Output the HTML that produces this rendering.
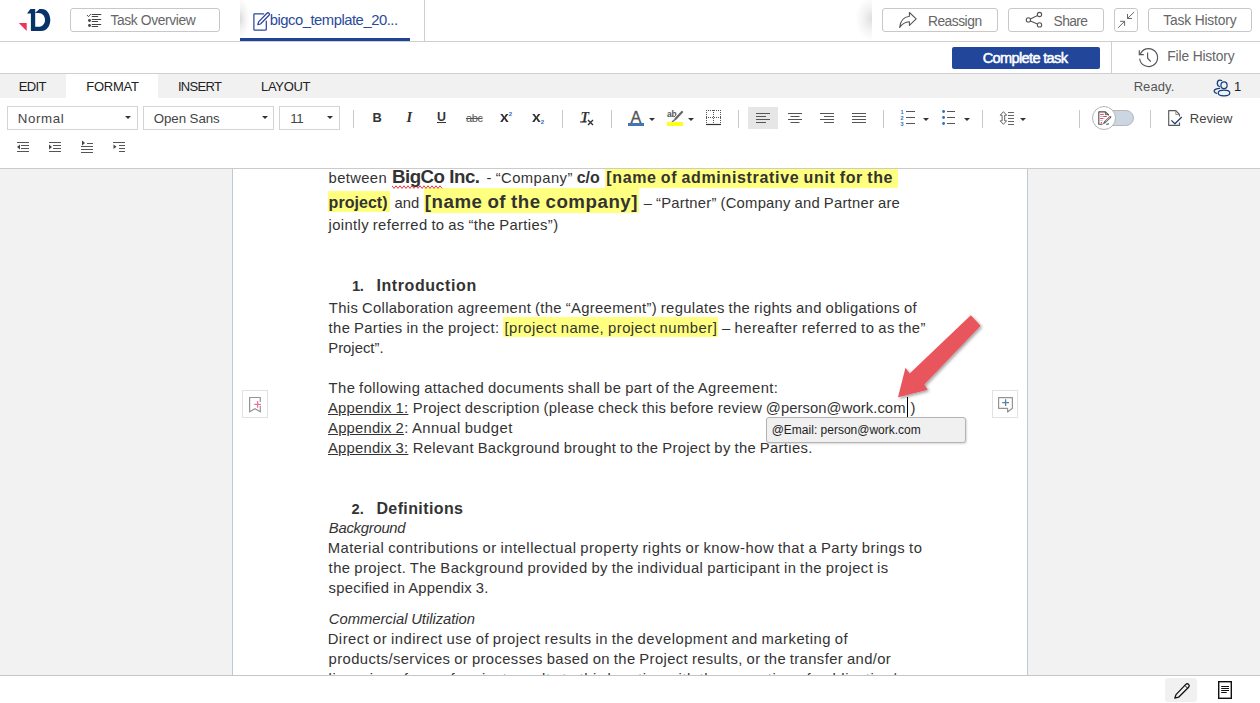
<!DOCTYPE html>
<html lang="en">
<head>
<meta charset="utf-8">
<title>bigco_template</title>
<style>
*{box-sizing:border-box;margin:0;padding:0}
html,body{width:1260px;height:703px;overflow:hidden;background:#fff}
body{font-family:"Liberation Sans",sans-serif;color:#333;position:relative}
.abs{position:absolute}
#top{position:absolute;left:0;top:0;width:1260px;height:42px;background:#fff;border-bottom:1px solid #cfcfcf}
#row2{position:absolute;left:0;top:42px;width:1260px;height:32px;background:#fff;border-bottom:1px solid #cfcfcf}
#menu{position:absolute;left:0;top:74px;width:1260px;height:24px;background:#f1f1f1}
#tools{position:absolute;left:0;top:98px;width:1260px;height:71px;background:#fff;border-bottom:1px solid #cbcbcb}
#work{position:absolute;left:0;top:169px;width:1260px;height:506px;background:#f2f2f2;overflow:hidden}
#page{position:absolute;left:233px;top:-10px;width:795px;height:530px;background:#fff;border:1px solid #cdd3e0}
#bottom{position:absolute;left:0;top:675px;width:1260px;height:28px;background:#fff;border-top:1px solid #c6c6c6}
.btn{position:absolute;border:1px solid #c8c8c8;border-radius:3px;background:#fff;color:#666;font-size:14px;line-height:22px;height:24px;white-space:nowrap}
.ln{position:absolute;white-space:nowrap;font-size:14.6px;line-height:20px;color:#333;left:328px}
.hl{background:#ffff80}
.sg{position:absolute;white-space:pre;line-height:20px;color:#333}
.u{text-decoration:underline}
.sep{position:absolute;width:1px;background:#c9c9c9}
.dd{position:absolute;border:1px solid #d4d4d4;height:24px;top:106px;font-size:13.5px;line-height:20px;color:#444;background:#fff}
.caret{position:absolute;width:0;height:0;border-left:3px solid transparent;border-right:3px solid transparent;border-top:3px solid #333}
.tb{line-height:22px;color:#333;white-space:nowrap}
.mi{position:absolute;top:75px;height:24px;line-height:24px;font-size:13.5px;color:#222;text-align:center}
/*FIT*/
#tov{font-size:13.8px !important;letter-spacing:-0.369px !important;left:39.41px !important;position:absolute !important;text-align:left !important;width:auto !important}
#tabtxt{font-size:14.8px !important;letter-spacing:-0.474px !important;left:269.66px !important;position:absolute !important;text-align:left !important;width:auto !important}
#t_re{font-size:13.8px !important;letter-spacing:-0.479px !important;left:44.91px !important;position:absolute !important;text-align:left !important;width:auto !important}
#t_sh{font-size:13.8px !important;letter-spacing:-0.612px !important;left:44.61px !important;position:absolute !important;text-align:left !important;width:auto !important}
#t_th{font-size:13.8px !important;letter-spacing:-0.169px !important;left:14.31px !important;position:absolute !important;text-align:left !important;width:auto !important}
#t_ct{font-size:14.6px !important;letter-spacing:-0.660px !important;left:30.67px !important;position:absolute !important;text-align:left !important;width:auto !important}
#t_fh{font-size:13.8px !important;letter-spacing:-0.147px !important;left:1167.31px !important;position:absolute !important;text-align:left !important;width:auto !important}
#m1{font-size:13px !important;letter-spacing:-0.608px !important;left:18.75px !important;position:absolute !important;text-align:left !important;width:auto !important}
#m2{font-size:13px !important;letter-spacing:-0.264px !important;left:86.25px !important;position:absolute !important;text-align:left !important;width:auto !important}
#m3{font-size:13px !important;letter-spacing:-0.687px !important;left:177.95px !important;position:absolute !important;text-align:left !important;width:auto !important}
#m4{font-size:13px !important;letter-spacing:-0.332px !important;left:261.05px !important;position:absolute !important;text-align:left !important;width:auto !important}
#m5{font-size:13px !important;letter-spacing:0.093px !important;left:1133.65px !important;position:absolute !important;text-align:left !important;width:auto !important}
#m6{font-size:13px !important;letter-spacing:-1.334px !important;left:1233.95px !important;position:absolute !important;text-align:left !important;width:auto !important}
#d1{font-size:13.3px !important;letter-spacing:0.654px !important;left:9.64px !important;position:absolute !important;text-align:left !important;width:auto !important}
#d2{font-size:13.3px !important;letter-spacing:-0.075px !important;left:9.74px !important;position:absolute !important;text-align:left !important;width:auto !important}
#d3{font-size:13.3px !important;letter-spacing:-0.482px !important;left:10.33px !important;position:absolute !important;text-align:left !important;width:auto !important}
#t_rv{font-size:13px !important;letter-spacing:0.015px !important;left:1189.75px !important;position:absolute !important;text-align:left !important;width:auto !important}
/*ENDFIT*/
</style>
</head>
<body>
<div id="top">
<svg class="abs" style="left:16px;top:6px" width="38" height="28" viewBox="16 6 38 28">
<polygon points="18.800,23.100 26.700,23.100 26.700,30.900" fill="#ee3358"/>
<path d="M27,13.400L30.400,8.900L35.200,8.900L35.200,12.700L39.500,8.900L41.800,8.900C46.700,8.900 50.300,13.800 50.300,19.900C50.300,26 46.500,30.900 41.300,30.900L30.900,30.900L30.900,13.600L27,13.600Z M35.200,13L38.600,13C42.400,13 45,16.100 45,19.900C45,23.700 42.400,26.800 38.600,26.800L35.200,26.800Z" fill="#08336a" fill-rule="evenodd"/>
</svg>
<div class="btn" style="left:70px;top:8px;width:150px"><svg class="abs" style="left:14px;top:3px" width="20" height="18" viewBox="85 12 20 18" fill="none" stroke="#444" stroke-linecap="round"><path d="M92.200,14.500H100.800M92.200,16.500H97.700M92.200,19.500H100.800M92.200,21.500H97.700M92.200,24.500H100.800M92.200,26.500H97.700" stroke-width="1.100"/><path d="M87.300,15.300L88.500,16.700L90.700,14.200" stroke-width="0.900"/><circle cx="89.500" cy="20.500" r="1.450" fill="#444" stroke="none"/><circle cx="89.500" cy="25.500" r="1.450" fill="#444" stroke="none"/></svg><span class="abs" style="left:40px;top:1px" id="tov">Task Overview</span></div>

<div class="abs" style="left:240px;top:0;width:185px;height:41px;background:#fff;border-right:1px solid #cfcfcf"></div>
<div class="abs" style="left:240px;top:0;width:11px;height:38px;background:radial-gradient(ellipse 10px 21px at 0% 50%,rgba(0,0,0,0.14),rgba(0,0,0,0.05) 50%,rgba(0,0,0,0) 100%)"></div>
<div class="abs" style="left:240px;top:38px;width:170px;height:3px;background:#1f4497"></div>
<svg class="abs" style="left:250px;top:8px" width="24" height="26" viewBox="250 8 24 26" fill="none" stroke="#2a4a9a" stroke-width="1.250" stroke-linejoin="round" stroke-linecap="round"><path d="M263.600,13.900H254.400Q253.900,13.900 253.900,14.400V29.600Q253.900,30.100 254.400,30.100H265.800Q266.300,30.100 266.300,29.600V21.200"/><path d="M258.600,21.900L266.900,13.300C267.500,12.700 268.400,12.700 269,13.300C269.600,13.900 269.600,14.700 269,15.300L260.500,24L257.800,24.700Z"/></svg>
<div class="abs" style="left:270px;top:9px;font-size:15.5px;line-height:22px;color:#2a4a9a;white-space:nowrap" id="tabtxt">bigco_template_20...</div>
<div class="abs" style="left:854px;top:0;width:18px;height:41px;background:radial-gradient(ellipse 17px 22px at 100% 46%,rgba(0,0,0,0.13),rgba(0,0,0,0.05) 50%,rgba(0,0,0,0) 100%)"></div>
<div class="abs" style="left:872px;top:0;width:388px;height:41px;background:#fff"></div>
<div class="btn" style="left:882px;top:8px;width:116px"><svg class="abs" style="left:12px;top:0px" width="24" height="22" viewBox="895 9 24 22" fill="none" stroke="#555" stroke-width="1.100" stroke-linejoin="round"><path d="M909.400,12.500L916.200,18.800L909.400,25.300V21.700C905,21.900 901.900,24 899.700,27.500C900.300,21.500 903.500,17 909.400,16.300Z"/></svg><span class="abs" style="left:46px;top:2px" id="t_re">Reassign</span></div>
<div class="btn" style="left:1008px;top:8px;width:96px"><svg class="abs" style="left:12px;top:0px" width="24" height="22" viewBox="1021 9 24 22" fill="none" stroke="#555" stroke-width="1.100"><circle cx="1028.400" cy="19.900" r="2.150"/><circle cx="1039.500" cy="14.500" r="2.150"/><circle cx="1039.500" cy="24.900" r="2.150"/><path d="M1030.400,18.900L1037.500,15.500M1030.400,20.900L1037.500,23.900"/></svg><span class="abs" style="left:46px;top:2px" id="t_sh">Share</span></div>
<div class="btn" style="left:1114px;top:8px;width:24px"><svg class="abs" style="left:0px;top:0px" width="22" height="22" viewBox="1115 9 22 22" fill="none" stroke="#666" stroke-width="1"><path d="M1134.200,12L1127.500,18.500M1127.500,14V18.500H1131.900M1118,27.900L1124.600,21.300M1120.100,21.300H1124.600V25.800"/></svg></div>
<div class="btn" style="left:1148px;top:8px;width:104px"><span class="abs" style="left:14px;top:1px" id="t_th">Task History</span></div>
</div>
<div id="row2">
<div class="abs" style="left:952px;top:5px;width:148px;height:22px;background:#21469a;border-radius:2px;color:#fff;font-size:14.5px;font-weight:normal;-webkit-text-stroke:0.5px #fff;line-height:22px;white-space:nowrap"><span class="abs" style="left:30px;top:0" id="t_ct">Complete task</span></div>
<div class="abs" style="left:1111px;top:0;width:1px;height:31px;background:#cfcfcf"></div>
<svg class="abs" style="left:1134px;top:3px" width="28" height="28" viewBox="1134 45 28 28" fill="none" stroke="#555" stroke-width="1.150"><path d="M1139.650,58.700A9,9 0 1 0 1140.100,54.600"/><path d="M1139.300,50.300V54.600H1143.800" stroke-linejoin="miter"/><path d="M1147.600,52.400V58.200L1150.800,61.600"/></svg>
<div class="abs" style="left:1168px;top:4px;font-size:14.5px;line-height:22px;color:#666;white-space:nowrap" id="t_fh">File History</div>
</div>
<div id="menu">
<div class="abs" style="left:66px;top:0;width:92px;height:24px;background:#fff"></div>
</div>
<div class="mi" style="left:19px" id="m1">EDIT</div>
<div class="mi" style="left:87px" id="m2">FORMAT</div>
<div class="mi" style="left:178.5px" id="m3">INSERT</div>
<div class="mi" style="left:261.5px" id="m4">LAYOUT</div>
<div class="mi" style="left:1134px;color:#555" id="m5">Ready.</div>
<svg class="abs" style="left:1210px;top:76px" width="24" height="22" viewBox="1210 76 24 22" fill="none" stroke="#123f7c" stroke-width="1.25" stroke-linecap="round"><ellipse cx="1224" cy="85.3" rx="3.1" ry="3.4"/><ellipse cx="1224" cy="93" rx="5.8" ry="2.8"/><path d="M1221.6,80.5 C1220.9,80.1 1220.4,80 1219.8,80 C1218.3,80 1217.3,81.5 1217.3,83.3 C1217.3,85 1218.2,86.2 1219.4,86.5"/><path d="M1219.6,88.3 C1218.2,88.4 1216.9,88.7 1215.9,89.1 C1214.7,89.6 1214.1,90.3 1214.1,91.1 C1214.1,92.1 1215,92.9 1216.5,93.4"/></svg>
<div class="mi" style="left:1234px;color:#222" id="m6">1</div>
<div id="tools"></div>
<div class="dd" style="left:7px;width:131px"><span class="abs" style="left:10px;top:2px" id="d1">Normal</span><i class="caret" style="left:117px;top:9px"></i></div>
<div class="dd" style="left:143px;width:131px"><span class="abs" style="left:10px;top:2px" id="d2">Open Sans</span><i class="caret" style="left:118px;top:9px"></i></div>
<div class="dd" style="left:279px;width:61px"><span class="abs" style="left:11px;top:2px" id="d3">11</span><i class="caret" style="left:47px;top:9px"></i></div>
<div class="sep" style="left:353px;top:110px;height:18px"></div>
<div class="abs tb" style="left:372.5px;top:106.5px;font-weight:bold;font-size:12.8px" id="tB">B</div>
<div class="abs tb" style="left:406.4px;top:106px;font-style:italic;font-family:'Liberation Serif',serif;font-weight:bold;font-size:14.5px" id="tI">I</div>
<div class="abs tb" style="left:437px;top:105.5px;font-weight:bold;font-size:12.4px" id="tU">U</div>
<div class="abs" style="left:437px;top:122px;width:9px;height:1px;background:#333"></div>
<div class="abs tb" style="left:466px;top:107.3px;font-size:11px;text-decoration:line-through;letter-spacing:-0.4px;color:#555" id="tS">abc</div>
<div class="abs tb" style="left:500px;top:105.9px;font-weight:bold;font-size:14px;transform:scaleX(1.12);transform-origin:left" id="tX1">x</div>
<div class="abs" style="left:508.8px;top:111.3px;font-weight:bold;font-size:6px;line-height:6px;color:#2a6fc0">2</div>
<div class="abs tb" style="left:532px;top:105.9px;font-weight:bold;font-size:14px;transform:scaleX(1.12);transform-origin:left" id="tX2">x</div>
<div class="abs" style="left:540.8px;top:119.2px;font-weight:bold;font-size:6px;line-height:6px;color:#2a6fc0">2</div>
<div class="sep" style="left:562px;top:110px;height:18px"></div>
<div class="abs tb" style="left:580.5px;top:106.9px;font-weight:bold;font-style:italic;font-size:14px;font-family:'Liberation Serif',serif" id="tT">T</div>
<svg class="abs" style="left:579px;top:117.300px" width="16" height="9" viewBox="0 0 16 9" stroke="#333" fill="none"><path d="M1,5H7.500" stroke-width="1.100"/><path d="M9,3L14,8M14,3L9,8" stroke-width="1.400"/></svg>
<div class="sep" style="left:611px;top:110px;height:18px"></div>
<div class="abs tb" style="left:630.6px;top:105.600px;font-size:16.2px;color:#555;-webkit-text-stroke:0.3px #555" id="tA">A</div>
<div class="abs" style="left:628px;top:123px;width:16px;height:3px;background:#3f76b9"></div>
<i class="caret" style="left:649px;top:118px;border-top-color:#333"></i>
<div class="abs" style="left:667px;top:108.500px;font-size:8.500px;font-weight:bold;line-height:10px;color:#555;letter-spacing:-0.2px">ab</div>
<svg class="abs" style="left:666px;top:108px" width="20" height="16" viewBox="666 108 20 16" fill="none"><path d="M682,112L675.600,118.800" stroke="#fff" stroke-width="4"/><path d="M682,112L675.400,119" stroke="#6a6a6a" stroke-width="2.300" stroke-linecap="round"/><path d="M674.800,119.600L672,122" stroke="#777" stroke-width="1.500"/></svg>
<div class="abs" style="left:667px;top:122px;width:16px;height:4px;background:#ffff1a"></div>
<i class="caret" style="left:688px;top:118px;border-top-color:#333"></i>
<svg class="abs" style="left:705px;top:110px" width="17" height="16" viewBox="0 0 17 16" fill="none" stroke="#555" stroke-width="1"><path d="M1,0.5H16M1,7.5H16M1.5,0V14M8.5,0V14M15.5,0V14" stroke-dasharray="1 1"/><path d="M1,14.5H16" stroke="#333" stroke-width="1.2"/></svg>
<div class="sep" style="left:738px;top:110px;height:18px"></div>
<div class="abs" style="left:748px;top:107px;width:30px;height:22px;background:#e6e6e6"></div>
<svg class="abs" style="left:0;top:0;pointer-events:none" width="1260" height="170" fill="none" stroke="#555" stroke-width="1">
<path d="M756,113.5H770M756,116.5H766M756,119.5H770M756,122.5H766M788,113.5H802M790.5,116.5H799.5M788,119.5H802M790.5,122.5H799.5M820,113.5H834M824,116.5H834M820,119.5H834M824,122.5H834M852,113.5H866M852,116.5H866M852,119.5H866M852,122.5H866"/>
</svg>
<div class="sep" style="left:883px;top:110px;height:18px"></div>
<svg class="abs" style="left:890px;top:104px;pointer-events:none" width="150" height="28" viewBox="890 104 150 28" fill="none">
<path d="M906,111.500H915M906,117.500H915M906,123.500H915M947,111.500H955M947,117.500H955M947,123.500H955" stroke="#555" stroke-width="1.100"/>
<path d="M1008,112.500H1014M1008,115.500H1014M1008,118.500H1014M1008,121.500H1014M1008,124.500H1014" stroke="#666" stroke-width="1"/>
<text x="900.600" y="113.800" font-family="Liberation Sans,sans-serif" font-size="5.500" font-weight="bold" fill="#2f6fbe">1</text>
<text x="900.600" y="119.800" font-family="Liberation Sans,sans-serif" font-size="5.500" font-weight="bold" fill="#2f6fbe">2</text>
<text x="900.600" y="125.800" font-family="Liberation Sans,sans-serif" font-size="5.500" font-weight="bold" fill="#2f6fbe">3</text>
<circle cx="943.600" cy="111.500" r="1.400" fill="#2f6fbe"/><circle cx="943.600" cy="117.500" r="1.400" fill="#2f6fbe"/><circle cx="943.600" cy="123.500" r="1.400" fill="#2f6fbe"/>
<path d="M1003.400,111.700 L1006.600,115.200 H1004.700 V120.800 H1006.600 L1003.400,124.300 L1000.200,120.800 H1002.100 V115.200 H1000.200 Z" stroke="#555" stroke-width="0.900" stroke-linejoin="round"/>
</svg>
<i class="caret" style="left:923px;top:118px"></i>
<i class="caret" style="left:964px;top:118px"></i>
<div class="sep" style="left:982px;top:110px;height:18px"></div>
<i class="caret" style="left:1020px;top:118px"></i>
<div class="sep" style="left:1079px;top:110px;height:18px"></div>
<div class="abs" style="left:1098px;top:110px;width:36px;height:16px;border-radius:8px;background:#cbd6e2;border:1px solid #b6b8bb"></div>
<div class="abs" style="left:1091.600px;top:106px;width:24px;height:24px;border-radius:12px;background:#fff;border:1px solid #b4b4b4"></div>
<svg class="abs" style="left:1094px;top:108px" width="20" height="20" viewBox="1094 108 20 20" fill="none"><path d="M1102.600,124.200H1098.800V111.900H1105.400L1108.500,114.700V115.600" stroke="#4e4e4e" stroke-width="1.100" stroke-linejoin="round"/><path d="M1105.400,111.900V114.700H1108.500" stroke="#4e4e4e" stroke-width="0.900"/><path d="M1106.200,124.200H1107.600Q1108.500,124.200 1108.500,123.200" stroke="#4e4e4e" stroke-width="1.100"/><path d="M1100.200,114.400H1103.800M1103.200,116.500H1106.800M1100.200,118.500H1103.100" stroke="#f23a66" stroke-width="1"/><path d="M1100.800,122.600H1102" stroke="#f23a66" stroke-width="1.100"/><path d="M1100.200,116.500H1103.200M1103.100,118.500H1104.600M1100.300,120.500H1102.700" stroke="#aaa" stroke-width="0.700"/><path d="M1110.300,117L1104.600,122.500" stroke="#fff" stroke-width="3.200"/><path d="M1110.300,117L1104.800,122.300" stroke="#5a5a5a" stroke-width="2.100" stroke-linecap="round"/><path d="M1110.200,117.100L1105.300,121.800" stroke="#fff" stroke-width="0.700"/><path d="M1104.600,122.500L1103.300,123.700" stroke="#666" stroke-width="1.200"/></svg>
<div class="sep" style="left:1150px;top:110px;height:18px"></div>
<svg class="abs" style="left:1160px;top:104px" width="30" height="28" viewBox="1160 104 30 28" fill="none" stroke-linejoin="round"><path d="M1179.500,116.500V114.500L1175.800,110.600H1168.700V125.400H1179.500V122.500" stroke="#5a5a5a" stroke-width="1.150"/><path d="M1175.800,110.600V114.500H1179.500" stroke="#888" stroke-width="0.900"/><path d="M1171.400,120.400L1174.900,123.700L1181.800,117" stroke="#1d3f77" stroke-width="1.300"/></svg>
<div class="abs" style="left:1190px;top:108.100px;font-size:14.5px;line-height:22px;color:#444;white-space:nowrap" id="t_rv">Review</div>
<svg class="abs" style="left:0;top:136px;pointer-events:none" width="140" height="22" fill="none" stroke="#555" stroke-width="1">
<path d="M17,6.5H29M21,9.5H29M21,12.5H29M17,15.5H29"/><path d="M20,8.5V13.5L17,11Z" fill="#444" stroke="none"/>
<path d="M49,6.5H61M53,9.5H61M53,12.5H61M49,15.5H61"/><path d="M49,8.5V13.5L52,11Z" fill="#444" stroke="none"/>
<path d="M87,7.5H93M81,10.5H93M81,13.5H93M81,16.5H93"/><path d="M82,4.5V9.5L85,7Z" fill="#444" stroke="none"/>
<path d="M113,6.5H125M119,9.5H125M119,12.5H125M119,15.5H125"/><path d="M113.500,8.5V13L116.500,10.700Z" fill="#444" stroke="none"/>
</svg>
<div id="work">
<div class="abs" style="left:232px;top:-1px;width:796px;height:520px;background:#fff;border-left:1px solid #bccbd8;border-right:1px solid #bccbd8"></div>
<div class="abs hl" style="left:605px;top:0px;width:293px;height:19px"></div>
<div class="abs hl" style="left:328px;top:22px;width:62px;height:21px"></div>
<div class="abs hl" style="left:424px;top:19px;width:215px;height:25px"></div>
<div class="abs hl" style="left:503px;top:148px;width:215px;height:20px"></div>
<svg class="abs" style="left:392px;top:15.5px" width="52" height="5" viewBox="0 0 52 5" fill="none" stroke="#e8242a" stroke-width="0.9"><polyline points="0.0,0.8 2.0,3.4 4.0,0.8 6.0,3.4 8.0,0.8 10.0,3.4 12.0,0.8 14.0,3.4 16.0,0.8 18.0,3.4 20.0,0.8 22.0,3.4 24.0,0.8 26.0,3.4 28.0,0.8 30.0,3.4 32.0,0.8 34.0,3.4 36.0,0.8 38.0,3.4 40.0,0.8 42.0,3.4 44.0,0.8 46.0,3.4 48.0,0.8 50.0,3.4"/></svg>
<div id="segs">
<span class="sg" id="s0" style="left:328.6px;top:-0.9px;font-size:14.8px;letter-spacing:0.358px;word-spacing:-0.658px;">between</span>
<span class="sg" id="s1" style="left:392.1px;top:-2.3px;font-size:18.7px;font-weight:bold;letter-spacing:-0.526px;word-spacing:0.226px;">BigCo Inc.</span>
<span class="sg" id="s2" style="left:486.5px;top:-0.9px;font-size:14.8px;letter-spacing:0.441px;word-spacing:-0.741px;">- “Company”</span>
<span class="sg" id="s3" style="left:576.7px;top:-1.3px;font-size:16px;font-weight:bold;letter-spacing:-0.013px;word-spacing:-0.287px;">c/o</span>
<span class="sg" id="s4" style="left:606.2px;top:-1.3px;font-size:16px;font-weight:bold;letter-spacing:0.674px;word-spacing:-0.974px;">[name of administrative unit for the</span>
<span class="sg" id="s5" style="left:328.6px;top:23.5px;font-size:16px;font-weight:bold;letter-spacing:0.033px;word-spacing:-0.333px;">project)</span>
<span class="sg" id="s6" style="left:394.5px;top:23.9px;font-size:14.8px;letter-spacing:0.048px;word-spacing:-0.348px;">and</span>
<span class="sg" id="s7" style="left:424.8px;top:22.5px;font-size:18.7px;font-weight:bold;letter-spacing:0.532px;word-spacing:-0.832px;">[name of the company]</span>
<span class="sg" id="s8" style="left:643.7px;top:23.9px;font-size:14.8px;letter-spacing:0.253px;word-spacing:-0.553px;">– “Partner” (Company and Partner are</span>
<span class="sg" id="s9" style="left:328.6px;top:46.1px;font-size:14.8px;letter-spacing:0.368px;word-spacing:-0.668px;">jointly referred to as “the Parties”)</span>
<span class="sg" id="s10" style="left:352.0px;top:106.9px;font-size:14.67px;font-weight:bold;letter-spacing:-0.434px;word-spacing:0.134px;">1.</span>
<span class="sg" id="s11" style="left:376.4px;top:106.5px;font-size:16px;font-weight:bold;letter-spacing:0.590px;word-spacing:-0.890px;">Introduction</span>
<span class="sg" id="s12" style="left:328.8px;top:128.7px;font-size:14.8px;letter-spacing:0.343px;word-spacing:-0.643px;">This Collaboration agreement (the “Agreement”) regulates the rights and obligations of</span>
<span class="sg" id="s13" style="left:328.6px;top:148.9px;font-size:14.8px;letter-spacing:0.360px;word-spacing:-0.660px;">the Parties in the project:</span>
<span class="sg" id="s14" style="left:504.5px;top:148.9px;font-size:14.8px;letter-spacing:0.481px;word-spacing:-0.781px;">[project name, project number]</span>
<span class="sg" id="s15" style="left:722.0px;top:148.9px;font-size:14.8px;letter-spacing:0.468px;word-spacing:-0.768px;">– hereafter referred to as the”</span>
<span class="sg" id="s16" style="left:328.3px;top:168.9px;font-size:14.8px;letter-spacing:0.013px;word-spacing:-0.313px;">Project”.</span>
<span class="sg" id="s17" style="left:328.6px;top:208.8px;font-size:14.8px;letter-spacing:0.405px;word-spacing:-0.705px;">The following attached documents shall be part of the Agreement:</span>
<span class="sg" id="s18" style="left:328.0px;top:228.9px;font-size:14.8px;text-decoration:underline;text-underline-offset:1.2px;letter-spacing:0.249px;word-spacing:-0.549px;">Appendix 1:</span>
<span class="sg" id="s19" style="left:412.8px;top:228.9px;font-size:14.8px;letter-spacing:0.307px;word-spacing:-0.607px;">Project description (please check this before review</span>
<span class="sg" id="s20" style="left:765.8px;top:228.9px;font-size:14.8px;letter-spacing:0.074px;word-spacing:-0.374px;">@person@work.com</span>
<span class="sg" id="s21" style="left:910.6px;top:228.9px;font-size:14.8px;letter-spacing:-0.938px;word-spacing:0.637px;">)</span>
<span class="sg" id="s22" style="left:328.0px;top:248.9px;font-size:14.8px;text-decoration:underline;text-underline-offset:1.2px;letter-spacing:0.257px;word-spacing:-0.557px;">Appendix 2</span>
<span class="sg" id="s23" style="left:404.3px;top:248.9px;font-size:14.8px;letter-spacing:0.478px;word-spacing:-0.778px;">: Annual budget</span>
<span class="sg" id="s24" style="left:328.0px;top:268.9px;font-size:14.8px;text-decoration:underline;text-underline-offset:1.2px;letter-spacing:0.249px;word-spacing:-0.549px;">Appendix 3:</span>
<span class="sg" id="s25" style="left:412.8px;top:268.9px;font-size:14.8px;letter-spacing:0.329px;word-spacing:-0.629px;">Relevant Background brought to the Project by the Parties.</span>
<span class="sg" id="s26" style="left:351.6px;top:329.9px;font-size:14.67px;font-weight:bold;letter-spacing:-0.034px;word-spacing:-0.266px;">2.</span>
<span class="sg" id="s27" style="left:376.4px;top:329.5px;font-size:16px;font-weight:bold;letter-spacing:0.393px;word-spacing:-0.693px;">Definitions</span>
<span class="sg" id="s28" style="left:328.8px;top:348.7px;font-size:14.8px;font-style:italic;letter-spacing:-0.243px;word-spacing:-0.057px;">Background</span>
<span class="sg" id="s29" style="left:327.7px;top:368.7px;font-size:14.8px;letter-spacing:0.507px;word-spacing:-0.807px;">Material contributions or intellectual property rights or know-how that a Party brings to</span>
<span class="sg" id="s30" style="left:328.6px;top:388.9px;font-size:14.8px;letter-spacing:0.428px;word-spacing:-0.728px;">the project. The Background provided by the individual participant in the project is</span>
<span class="sg" id="s31" style="left:328.6px;top:408.9px;font-size:14.8px;letter-spacing:0.261px;word-spacing:-0.561px;">specified in Appendix 3.</span>
<span class="sg" id="s32" style="left:328.8px;top:439.5px;font-size:14.8px;font-style:italic;letter-spacing:-0.034px;word-spacing:-0.266px;">Commercial Utilization</span>
<span class="sg" id="s33" style="left:327.7px;top:459.6px;font-size:14.8px;letter-spacing:0.495px;word-spacing:-0.795px;">Direct or indirect use of project results in the development and marketing of</span>
<span class="sg" id="s34" style="left:328.6px;top:479.5px;font-size:14.8px;letter-spacing:0.389px;word-spacing:-0.689px;">products/services or processes based on the Project results, or the transfer and/or</span>
<span class="sg" id="s35" style="left:328.6px;top:499.5px;font-size:14.8px;letter-spacing:0.559px;word-spacing:-0.859px;">licensing of use of project results to third parties with the exception of publication/</span>
</div>
<div class="abs" style="left:907px;top:228px;width:1px;height:20px;background:#000"></div>
<div class="abs" style="left:242px;top:221px;width:26px;height:28px;border:1px solid #e2e2e2;background:#fff"></div>
<svg class="abs" style="left:248px;top:227px" width="14" height="18" viewBox="0 0 14 18" fill="none"><path d="M12.300,6 V1.500 H1.600 V15.800 L7,12.700 L12.300,15.800 V9.800" stroke="#949494" stroke-width="1.2"/><path d="M6.200,8.400 H13 M9.600,5 V11.800" stroke="#f5709a" stroke-width="1.300"/></svg>
<div class="abs" style="left:992px;top:221px;width:26px;height:28px;border:1px solid #e2e2e2;background:#fff"></div>
<svg class="abs" style="left:997px;top:227px" width="17" height="18" viewBox="0 0 17 18" fill="none"><path d="M1.600,1.600 H15.400 V12.300 L10.600,16 V12.300 H1.600 Z" stroke="#949494" stroke-width="1.200" stroke-linejoin="round"/><path d="M5.200,6.600 H12 M8.600,3.200 V10" stroke="#5a7fa8" stroke-width="1.300"/></svg>
<div class="abs" style="left:766px;top:248px;width:200px;height:26px;background:#f0f0f0;border:1px solid #b4b4b4;border-radius:3px;font-size:12px;line-height:25px;color:#222;padding-left:4.700px;white-space:nowrap;box-shadow:1px 1px 2px rgba(0,0,0,0.15)" id="tip">@Email: person@work.com</div>
<svg class="abs" style="left:880px;top:131px;overflow:visible" width="120" height="110" viewBox="880 300 120 110"><defs><filter id="sh" x="-20%" y="-20%" width="150%" height="150%"><feDropShadow dx="1.500" dy="1.500" stdDeviation="1.400" flood-color="#000" flood-opacity="0.380"/></filter></defs><polygon filter="url(#sh)" fill="#e8545b" points="970.8,315.2 980.6,325.8 924.3,384.5 927.7,389.700 898,397.3 905.5,367.8 909.7,373.6"/></svg>
</div>
<div id="bottom">
<div class="abs" style="left:1165px;top:2px;width:32px;height:24px;background:#f1f1f1;border-radius:3px"></div>
<svg class="abs" style="left:1173px;top:6px" width="18" height="18" viewBox="0 0 18 18" fill="none" stroke="#111" stroke-width="1.300" stroke-linejoin="round"><path d="M1.800,16.200 L3,12.600 L12.800,2.400 C13.600,1.600 14.800,1.600 15.600,2.400 C16.400,3.200 16.400,4.400 15.600,5.200 L5.600,15.200 Z"/><path d="M11.800,3.400 L14.600,6.200" stroke-width="1"/></svg>
<svg class="abs" style="left:1218px;top:5px" width="14" height="18" viewBox="0 0 14 18" fill="none" stroke="#111"><rect x="0.700" y="0.700" width="12.600" height="16.600" stroke-width="1.400"/><path d="M3.200,5.500 H11 M3.200,7.500 H11 M3.200,9.500 H11 M3.200,11.500 H8.700" stroke-width="1"/></svg>
</div>
</body>
</html>
